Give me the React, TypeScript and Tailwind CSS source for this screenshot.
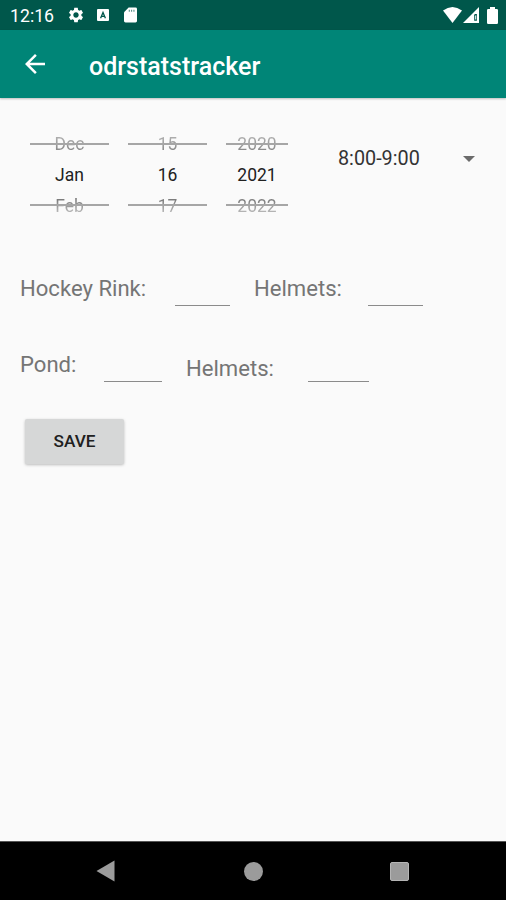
import React from "react";

const pickerColumns = [
  { width: "w-[79px]", values: ["Dec", "Jan", "Feb"] },
  { width: "w-[79px]", values: ["15", "16", "17"] },
  { width: "w-[62px]", values: ["2020", "2021", "2022"] },
];

// Status bar with clock, notifications and system icons
const StatusBar = () => (
  <div className="flex h-[30px] shrink-0 items-center bg-[#00574b] pl-[10px] pr-[8px] text-white">
    <span className="w-[57px] pt-[3px] text-[17.7px] leading-none">12:16</span>
    <svg className="h-[18px] w-[18px]" viewBox="0 0 24 24" fill="currentColor">
      <path d="M19.14 12.94c.04-.3.06-.61.06-.94 0-.32-.02-.64-.07-.94l2.03-1.58c.18-.14.23-.41.12-.61l-1.92-3.32c-.12-.22-.37-.29-.59-.22l-2.39.96c-.5-.38-1.03-.7-1.62-.94l-.36-2.54c-.04-.24-.24-.41-.48-.41h-3.84c-.24 0-.43.17-.47.41l-.36 2.54c-.59.24-1.13.57-1.62.94l-2.39-.96c-.22-.08-.47 0-.59.22L2.74 8.87c-.12.21-.08.47.12.61l2.03 1.58c-.05.3-.09.63-.09.94s.02.64.07.94l-2.03 1.58c-.18.14-.23.41-.12.61l1.92 3.32c.12.22.37.29.59.22l2.39-.96c.5.38 1.03.7 1.62.94l.36 2.54c.05.24.24.41.48.41h3.84c.24 0 .44-.17.47-.41l.36-2.54c.59-.24 1.13-.56 1.62-.94l2.39.96c.22.08.47 0 .59-.22l1.92-3.32c.12-.22.07-.47-.12-.61l-2.01-1.58zM12 15.6c-1.98 0-3.6-1.62-3.6-3.6s1.62-3.6 3.6-3.6 3.6 1.62 3.6 3.6-1.62 3.6-3.6 3.6z" />
    </svg>
    <svg className="ml-[12px] h-[12px] w-[12px]" viewBox="0 0 12 12">
      <rect width="12" height="12" rx="1" fill="currentColor" />
      <path d="M3.6 9.2L6 3.4l2.4 5.8M4.6 7.4h2.8" fill="none" stroke="#00574b" strokeWidth="1.3" />
    </svg>
    <svg className="ml-[15px] h-[16px] w-[13px]" viewBox="0 0 14 16">
      <path d="M5 0h7.4Q14 0 14 1.6v12.8q0 1.6-1.6 1.6H1.6Q0 16 0 14.4V5z" fill="currentColor" />
      <path d="M5.7 2.4v2.2M8.2 2.4v2.2M10.7 2.4v2.2" stroke="#00574b" strokeOpacity="0.7" strokeWidth="1.1" />
    </svg>
    <svg className="ml-auto h-[16px] w-[19px]" viewBox="0 0 19 16" fill="currentColor">
      <path d="M0 3.5Q9.5-3.5 19 3.5L9.5 16z" />
    </svg>
    <svg className="ml-px h-[16px] w-[16px]" viewBox="0 0 16 16">
      <path d="M16 0v16H0z" fill="currentColor" />
      <path d="M11.2 13.8V8.2q0-1.2 1.1-1.2h1.6v6.8z" fill="#00574b" />
      <path d="M12.7 8.5v4" stroke="white" strokeWidth="1" />
    </svg>
    <svg className="ml-[8px] h-[17px] w-[11px]" viewBox="0 0 11 17" fill="currentColor">
      <path d="M3 0h5v2h1.8q1.2 0 1.2 1.2v12.6q0 1.2-1.2 1.2H1.2Q0 17 0 15.8V3.2Q0 2 1.2 2H3z" />
    </svg>
  </div>
);

const AppBar = () => (
  <header className="flex h-[68px] shrink-0 items-center bg-[#008577] pl-[20px] text-white shadow-[0_1px_2px_rgba(0,0,0,0.25)]">
    <svg className="h-[30px] w-[30px]" viewBox="0 0 24 24" fill="currentColor">
      <path d="M20 11H7.83l5.59-5.59L12 4l-8 8 8 8 1.41-1.41L7.83 13H20v-2z" />
    </svg>
    <h1 className="ml-[39px] pt-[5px] text-[25px] font-medium leading-none">odrstatstracker</h1>
  </header>
);

const PickerColumn = ({ width, values }: { width: string; values: string[] }) => (
  <div className={`relative h-[90px] text-center text-[17.5px] leading-[31px] ${width}`}>
    <div className="bg-linear-to-b from-black/30 from-25% to-black/55 bg-clip-text text-transparent">
      {values[0]}
    </div>
    <div className="text-[#212121]">{values[1]}</div>
    <div className="bg-linear-to-b from-black/55 from-20% to-black/20 to-80% bg-clip-text text-transparent">
      {values[2]}
    </div>
    <div className="absolute inset-x-0 top-[14px] h-[2px] bg-[#a6a6a6]" />
    <div className="absolute inset-x-0 top-[75px] h-[2px] bg-[#a6a6a6]" />
  </div>
);

const Field = ({ label, className, inputClass }: { label: string; className: string; inputClass: string }) => (
  <label className={`flex items-start text-[22.1px] leading-[26px] text-[#757575] ${className}`}>
    <span className="whitespace-nowrap">{label}</span>
    <input className={`border-b border-[#8b8b8b] bg-transparent outline-none ${inputClass}`} />
  </label>
);

const NavigationBar = () => (
  <nav className="flex h-[59px] shrink-0 items-center border-t border-[#555] bg-black pl-[96px] text-[#9b9b9b]">
    <svg className="h-[22px] w-[19px]" viewBox="0 0 19 22" fill="currentColor">
      <path d="M18.5.5v21L.5 11z" />
    </svg>
    <div className="ml-[129px] h-[19px] w-[19px] rounded-full bg-[#9b9b9b]" />
    <div className="ml-[127px] h-[19px] w-[19px] rounded-[2px] border border-[#b5b5b5] bg-[#9b9b9b]" />
  </nav>
);

export default function App() {
  return (
    <div className="flex h-[900px] w-[506px] flex-col overflow-hidden bg-[#fafafa] font-[Roboto,sans-serif]">
      <StatusBar />
      <AppBar />
      <main className="flex-1">
        <div className="flex pl-[30px] pt-[31px]">
          <div className="flex gap-[19px]">
            {pickerColumns.map((column) => (
              <PickerColumn key={column.values[0]} {...column} />
            ))}
          </div>
          <div className="ml-[50px] mt-[17px] flex h-[26px] w-[137px] items-center justify-between text-[19.8px] text-[#333]">
            <span>8:00-9:00</span>
            <svg className="h-[6px] w-[12px]" viewBox="0 0 12 6" fill="#6b6b6b">
              <path d="M0 0h12L6 6z" />
            </svg>
          </div>
        </div>

        <div className="flex pl-[20px] pt-[56px]">
          <Field label="Hockey Rink:" className="w-[234px]" inputClass="ml-auto mr-[24px] h-[31px] w-[55px]" />
          <Field label="Helmets:" className="w-[169px]" inputClass="ml-auto h-[31px] w-[55px]" />
        </div>

        <div className="flex pl-[20px] pt-[45px]">
          <Field label="Pond:" className="w-[142px]" inputClass="ml-auto h-[31px] w-[58px]" />
          <Field label="Helmets:" className="ml-[24px] mt-[4px] w-[183px]" inputClass="ml-auto h-[27px] w-[61px]" />
        </div>

        <button className="ml-[25px] mt-[37px] flex h-[45px] w-[99px] items-center justify-center rounded-[2px] bg-[#d6d7d7] pt-px text-[17.2px] font-medium text-[#202020] shadow-[0_1px_3px_rgba(0,0,0,0.25)]">
          SAVE
        </button>
      </main>
      <NavigationBar />
    </div>
  );
}
